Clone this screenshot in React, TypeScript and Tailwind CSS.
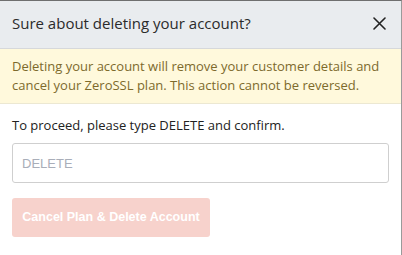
import React from "react";

export default function App() {
  return (
    <div className="w-[402px] h-[255px] bg-white overflow-hidden flex flex-col border-t border-[#6f6f6f] border-r border-r-[#9a9a9a]" style={{ fontFamily: '"Open Sans", sans-serif' }}>
      <div className="h-[48px] shrink-0 bg-[#e9ecef] border-b border-[#d6d8db] flex items-center justify-between pl-3 pr-[15px] pb-[2px]">
        <span className="text-[15px] text-[#2b2b2b]">Sure about deleting your account?</span>
        <svg width="13" height="13" viewBox="0 0 13 13" className="text-[#222]">
          <path d="M1 1 L12 12 M12 1 L1 12" stroke="currentColor" strokeWidth="1.6" strokeLinecap="round" />
        </svg>
      </div>
      <div className="bg-[#fff9dc] border-b border-[#ece8d2] px-3 pt-[8px] pb-[8px] text-[13px] leading-[19px] text-[#7d6a2c]">
        Deleting your account will remove your customer details and cancel your ZeroSSL plan. This action cannot be reversed.
      </div>
      <div className="px-3 pt-[11px]">
        <div className="text-[13px] leading-[20px] text-[#222]">To proceed, please type DELETE and confirm.</div>
        <input
          className="mt-[8px] w-full h-[40px] border border-[#cfcfcf] rounded-[3px] px-[9px] text-[13px] outline-none placeholder:text-[#a9aeb9]"
          style={{ fontFamily: '"Liberation Sans", Arial, sans-serif' }}
          placeholder="DELETE"
        />
        <button
          className="mt-[15px] w-[198px] h-[39px] bg-[#f7d2cc] rounded-[3px] text-white text-[12.5px] font-bold"
          style={{ fontFamily: '"Liberation Sans", Arial, sans-serif' }}
        >
          Cancel Plan &amp; Delete Account
        </button>
      </div>
    </div>
  );
}
